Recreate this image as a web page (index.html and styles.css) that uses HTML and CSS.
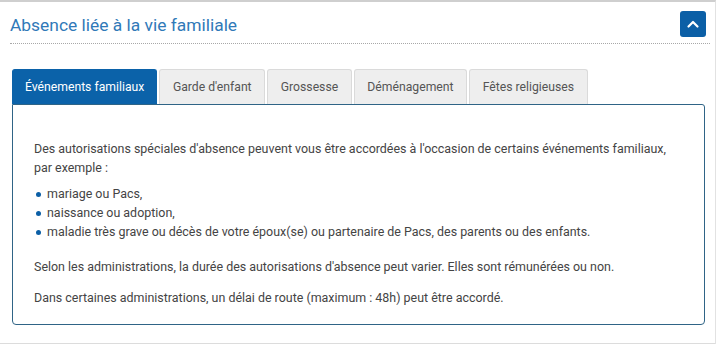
FILE: index.html
```html
<!DOCTYPE html>
<html lang="fr">
<head>
<meta charset="utf-8">
<title>Absence liée à la vie familiale</title>
<link rel="stylesheet" href="styles.css">
</head>
<body>
<section class="block">
  <div class="header">
    <h2 class="title">Absence liée à la vie familiale</h2>
    <button class="toggle" aria-label="Replier">
      <svg width="26" height="26" viewBox="0 0 26 26"><polyline points="8.5,15.5 13,11 17.5,15.5" fill="none" stroke="#fff" stroke-width="2.2" stroke-linecap="round" stroke-linejoin="round"/></svg>
    </button>
  </div>
  <div class="tabs">
    <div class="tab active">Événements familiaux</div>
    <div class="tab">Garde d'enfant</div>
    <div class="tab">Grossesse</div>
    <div class="tab">Déménagement</div>
    <div class="tab">Fêtes religieuses</div>
  </div>
  <div class="panel">
    <p class="intro">Des autorisations spéciales d'absence peuvent vous être accordées à l'occasion de certains événements familiaux, par exemple :</p>
    <ul class="list">
      <li>mariage ou Pacs,</li>
      <li>naissance ou adoption,</li>
      <li>maladie très grave ou décès de votre époux(se) ou partenaire de Pacs, des parents ou des enfants.</li>
    </ul>
    <p>Selon les administrations, la durée des autorisations d'absence peut varier. Elles sont rémunérées ou non.</p>
    <p class="last">Dans certaines administrations, un délai de route (maximum : 48h) peut être accordé.</p>
  </div>
</section>
</body>
</html>
```

FILE: styles.css
```css
html, body {
  margin: 0;
  padding: 0;
  background: #fff;
}
body {
  font-family: Roboto, "Liberation Sans", Arial, sans-serif;
  color: #444;
}
.block {
  width: 700px;
  padding: 0 5px 18px 10px;
  border-top: 2px solid #cfcfcf;
  border-right: 1px solid #e2e2e2;
  border-bottom: 2px solid #dcdcdc;
}
.header {
  display: flex;
  align-items: center;
  justify-content: space-between;
  padding: 9px 4px 6px 0;
  border-bottom: 1px dotted #a8a8a8;
}
.title {
  margin: 0;
  font-size: 17.4px;
  font-weight: 400;
  color: #3079b8;
  line-height: 26px;
  position: relative;
  top: 1px;
}
.toggle {
  width: 26px;
  height: 26px;
  padding: 0;
  border: 0;
  border-radius: 3px;
  background: #0b5fa6;
  display: flex;
  align-items: center;
  justify-content: center;
}
.toggle svg { display: block; }
.tabs {
  display: flex;
  gap: 2px;
  margin: 25px 0 0 2px;
}
.tab {
  height: 35px;
  box-sizing: border-box;
  padding: 0 12.6px;
  display: flex;
  align-items: center;
  font-size: 12.2px;
  color: #555;
  background: #eeeeee;
  border: 1px solid #dadada;
  border-bottom: 0;
  border-radius: 3px 3px 0 0;
}
.tab.active {
  padding: 0 12px;
  background: #0b62a9;
  border-color: #0b62a9;
  color: #fff;
}
.panel {
  margin: 0 5px 0 2px;
  border: 1px solid #2f6486;
  border-radius: 0 3px 4px 4px;
  padding: 34px 20px 17px 21px;
  font-size: 12.45px;
  line-height: 19px;
}
.panel p {
  margin: 0 0 12px;
}
.panel p.intro {
  margin: 0 0 7px;
}
.panel p.last {
  margin: 0;
}
.list {
  list-style: none;
  margin: 0 0 16px;
  padding: 0;
}
.list li {
  position: relative;
  padding-left: 13px;
}
.list li::before {
  content: "";
  position: absolute;
  left: 2px;
  top: 8px;
  width: 5px;
  height: 5px;
  border-radius: 50%;
  background: #0b5fa6;
}
```
